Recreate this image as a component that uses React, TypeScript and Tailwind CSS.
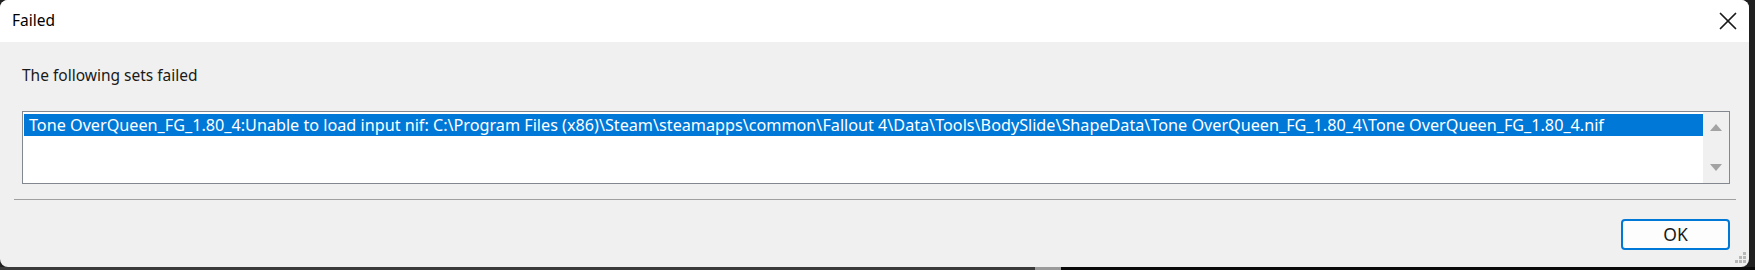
import { X } from "lucide-react"

const message =
  "Tone OverQueen_FG_1.80_4:Unable to load input nif: C:\\Program Files (x86)\\Steam\\steamapps\\common\\Fallout 4\\Data\\Tools\\BodySlide\\ShapeData\\Tone OverQueen_FG_1.80_4\\Tone OverQueen_FG_1.80_4.nif"

function SizeGrip() {
  const dots = [
    [8, 0],
    [4, 4],
    [8, 4],
    [0, 8],
    [4, 8],
    [8, 8],
  ]
  return (
    <svg width="11" height="11" viewBox="0 0 11 11" className="absolute right-[3px] bottom-[4px]">
      {dots.map(([x, y]) => (
        <rect key={`${x}-${y}`} x={x} y={y} width="3" height="3" fill="#b8b8b8" />
      ))}
    </svg>
  )
}

export default function App() {
  return (
    <div
      className="w-[1755px] h-[270px] bg-[#202020] flex flex-col"
      style={{ fontFamily: '"Segoe UI", "Noto Sans", sans-serif' }}
    >
      <div className="w-[1749px] h-[267px] rounded-lg overflow-hidden flex flex-col bg-[#f0f0f0] relative">
        {/* Title bar */}
        <div className="h-[42px] bg-white flex items-center justify-between shrink-0">
          <span className="pl-[12px] text-[15.5px] text-black">Failed</span>
          <div className="w-[40px] h-full flex items-center justify-center mr-[1px]">
            <X className="w-[30px] h-[30px] text-[#1a1a1a]" strokeWidth={1.4} absoluteStrokeWidth />
          </div>
        </div>

        {/* Body */}
        <div className="flex flex-col flex-1">
          <div className="mt-[22px] pl-[22px] h-[22px] leading-[22px] text-[15.5px] text-[#1a1a1a]">
            The following sets failed
          </div>

          <div className="mt-[25px] ml-[22px] mr-[19px] h-[73px] border border-[#828790] bg-white flex">
            <div className="flex-1 pt-[2px] pl-[1px]">
              <div className="h-[22px] bg-[#0078d7] text-white text-[16.2px] leading-[22px] pl-[5px] whitespace-nowrap overflow-hidden">
                {message}
              </div>
            </div>
            <div className="w-[26px] bg-[#f0f0f0] flex flex-col items-center justify-between py-[12px]">
              <svg width="12" height="7" viewBox="0 0 12 7">
                <path d="M6 0 L12 7 L0 7 Z" fill="#a3a3a3" />
              </svg>
              <svg width="12" height="7" viewBox="0 0 12 7">
                <path d="M0 0 L12 0 L6 7 Z" fill="#a3a3a3" />
              </svg>
            </div>
          </div>

          <div className="mt-[15px] ml-[14px] mr-[13px] h-[1px] bg-[#a0a0a0]" />

          <div className="mt-[19px] flex justify-end mr-[19px]">
            <button className="w-[109px] h-[31px] rounded-[4px] border-2 border-[#0078d7] bg-[#fdfdfd] text-[17.5px] text-[#1a1a1a] flex items-center justify-center">
              OK
            </button>
          </div>
        </div>

        <SizeGrip />
      </div>

      {/* Taskbar edge */}
      <div className="h-[3px] flex">
        <div className="w-[1035px] bg-[#3a3a3a]" />
        <div className="w-[26px] bg-[#9a9a9a]" />
        <div className="flex-1 bg-[#0a0a0a]" />
      </div>
    </div>
  )
}
